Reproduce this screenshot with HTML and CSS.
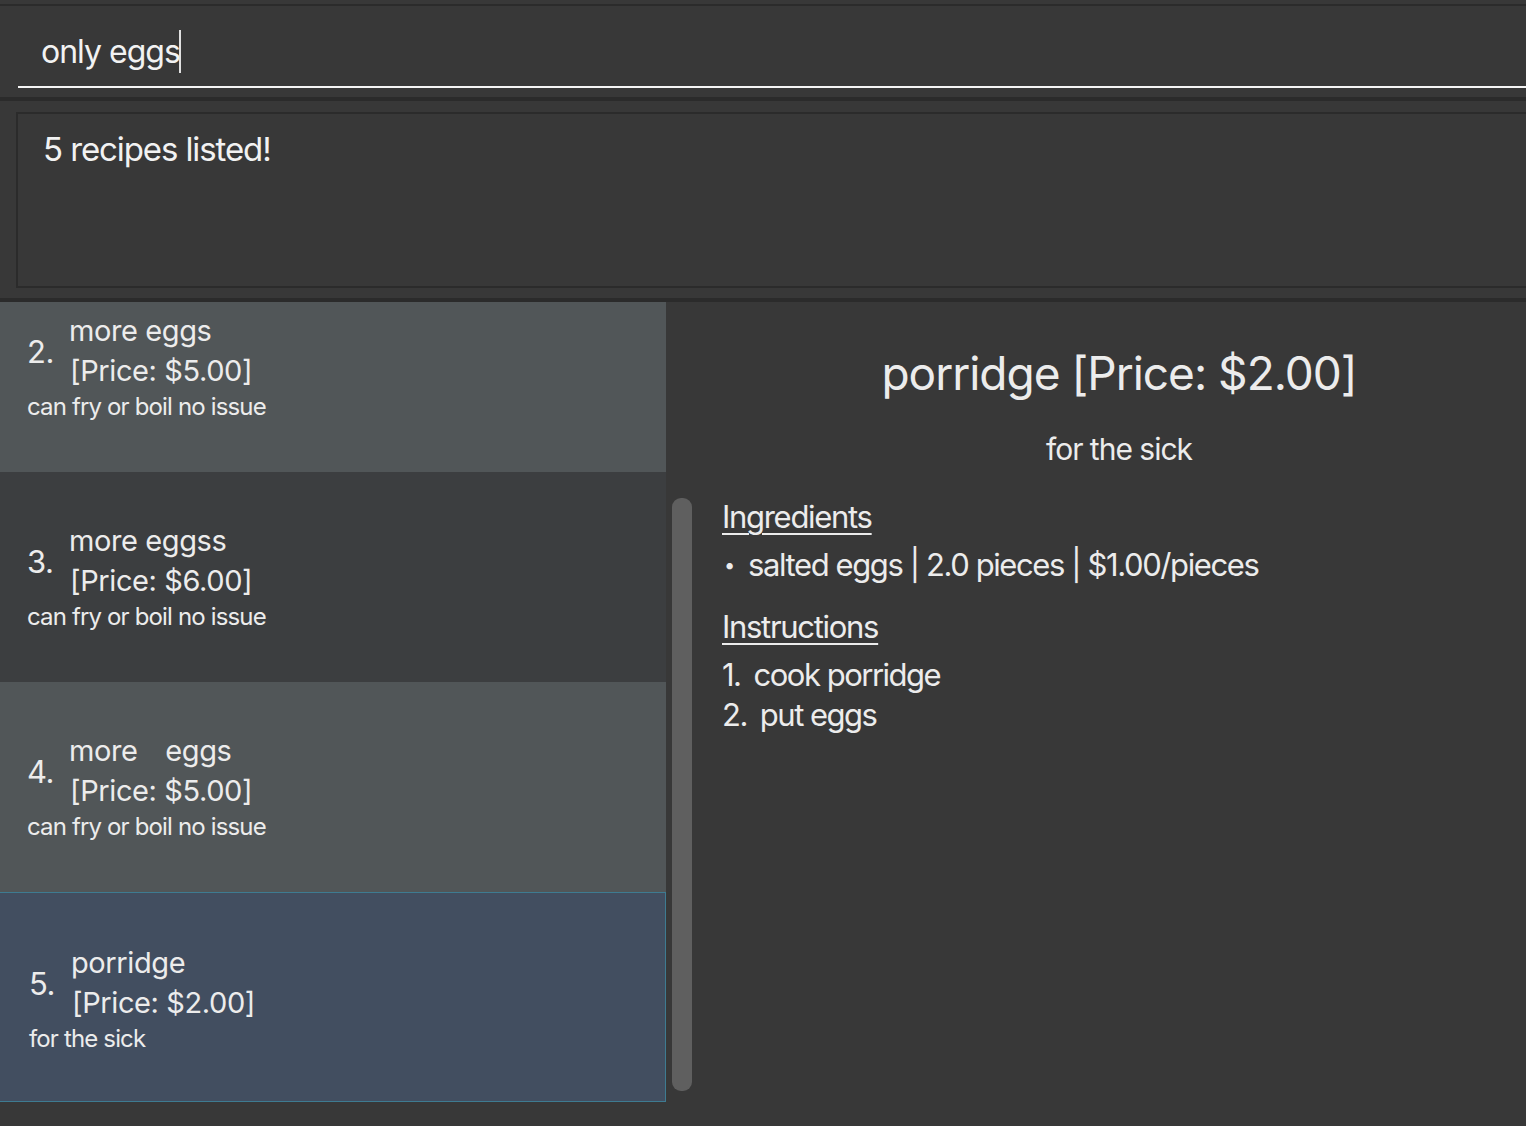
FILE: index.html
```html
<!DOCTYPE html>
<html>
<head>
<meta charset="utf-8">
<link rel="stylesheet" href="styles.css">
</head>
<body>
<div class="app">
  <div class="top-line"></div>
  <div class="command">
    <div class="command-field"><span class="command-text">only eggs</span><span class="caret"></span></div>
  </div>
  <div class="band"></div>
  <div class="result-wrap">
    <div class="result-box">5 recipes listed!</div>
  </div>
  <div class="band"></div>
  <div class="main">
    <div class="list">
      <div class="list-inner">
        <div class="card card-grey">
          <div class="card-head">
            <span class="num">2.</span>
            <div class="title-block"><div class="name">more eggs</div><div class="price">[Price: $5.00]</div></div>
          </div>
          <div class="desc">can fry or boil no issue</div>
        </div>
        <div class="card card-dark">
          <div class="card-head">
            <span class="num">3.</span>
            <div class="title-block"><div class="name">more eggss</div><div class="price">[Price: $6.00]</div></div>
          </div>
          <div class="desc">can fry or boil no issue</div>
        </div>
        <div class="card card-grey">
          <div class="card-head">
            <span class="num">4.</span>
            <div class="title-block"><div class="name wide-gap">more&nbsp;&nbsp; eggs</div><div class="price">[Price: $5.00]</div></div>
          </div>
          <div class="desc">can fry or boil no issue</div>
        </div>
        <div class="card card-selected">
          <div class="card-head">
            <span class="num">5.</span>
            <div class="title-block"><div class="name">porridge</div><div class="price">[Price: $2.00]</div></div>
          </div>
          <div class="desc">for the sick</div>
        </div>
      </div>
    </div>
    <div class="scroll-col"><div class="thumb"></div></div>
    <div class="detail">
      <div class="detail-title">porridge [Price: $2.00]</div>
      <div class="detail-desc">for the sick</div>
      <div class="section-label">Ingredients</div>
      <div class="ingredient"><span class="bullet">•</span><span>salted eggs | 2.0 pieces | $1.00/pieces</span></div>
      <div class="section-label instr-label">Instructions</div>
      <div class="step first-step"><span class="step-num">1.</span><span>cook porridge</span></div>
      <div class="step"><span class="step-num">2.</span><span>put eggs</span></div>
    </div>
  </div>
</div>
</body>
</html>
```

FILE: styles.css
```css
* { box-sizing: border-box; }
html, body {
  margin: 0;
  padding: 0;
  background: #383838;
  width: 1526px;
  height: 1126px;
  overflow: hidden;
  font-family: Inter, "Noto Sans", sans-serif;
  color: #ececec;
}
.app {
  display: flex;
  flex-direction: column;
  height: 1126px;
}
.top-line {
  margin-top: 4px;
  height: 2px;
  background: #2b2b2b;
}
.command {
  height: 91px;
  padding-left: 18px;
  padding-top: 22px;
}
.command-field {
  height: 60px;
  border-bottom: 2px solid #f4f4f4;
  padding-left: 23px;
  display: flex;
  align-items: flex-start;
}
.command-text {
  font-size: 32px;
  line-height: 48px;
  letter-spacing: -1px;
  color: #f2f2f2;
}
.caret {
  width: 2px;
  height: 43px;
  background: #e0e0e0;
  margin-top: 2px;
  margin-left: -1px;
}
.band {
  height: 4px;
  background: #2b2b2b;
}
.result-wrap {
  height: 197px;
  padding: 11px 0 10px 16px;
}
.result-box {
  height: 176px;
  border: 2px solid #2b2b2b;
  border-right: none;
  padding: 13px 0 0 25px;
  font-size: 33px;
  line-height: 44px;
  letter-spacing: -1.1px;
  color: #f2f2f2;
}
.main {
  flex: 1;
  display: flex;
  min-height: 0;
}
.list {
  width: 666px;
  height: 800px;
  overflow: hidden;
}
.list-inner {
  margin-top: -40px;
}
.card {
  height: 210px;
  padding: 49px 0 0 27px;
}
.card-grey { background: #515658; }
.card-dark { background: #3c3e40; }
.card-selected {
  background: #424e60;
  border: 1px solid #3e7b91;
  border-left: none;
  padding: 50px 0 0 29px;
}
.card-head {
  display: flex;
  align-items: center;
}
.num {
  font-size: 31px;
  width: 42px;
  letter-spacing: -0.5px;
}
.title-block {
  font-size: 29px;
  line-height: 40px;
  letter-spacing: -0.4px;
}
.wide-gap { word-spacing: 1.5px; }
.price { padding-left: 1px; }
.desc {
  font-size: 24px;
  line-height: 34px;
  letter-spacing: -0.85px;
  margin-top: -1px;
}
.scroll-col {
  width: 46px;
  padding-left: 6px;
  padding-top: 196px;
}
.thumb {
  width: 20px;
  height: 593px;
  background: #5f5f5f;
  border-radius: 9px;
}
.detail {
  flex: 1;
  padding: 39px 0 0 10px;
}
.detail-title {
  text-align: center;
  font-size: 46px;
  line-height: 64px;
  letter-spacing: -1px;
  padding-right: 10px;
}
.detail-desc {
  text-align: center;
  font-size: 30px;
  line-height: 44px;
  letter-spacing: -1px;
  margin-top: 22px;
  padding-right: 10px;
}
.section-label {
  display: inline-block;
  font-size: 31px;
  line-height: 44px;
  letter-spacing: -1.3px;
  text-decoration: underline;
  text-decoration-thickness: 2px;
  text-underline-offset: 5px;
  margin-top: 24px;
}
.instr-label { margin-top: 20px; }
.ingredient, .step {
  font-size: 31px;
  line-height: 40px;
  display: flex;
}
.ingredient {
  margin-top: 6px;
  letter-spacing: -1.4px;
}
.step { letter-spacing: -1.5px; }
.first-step { margin-top: 6px; }
.bullet {
  width: 26px;
  font-size: 20px;
  padding-left: 2px;
}
.step-num { margin-right: 13px; }
```
